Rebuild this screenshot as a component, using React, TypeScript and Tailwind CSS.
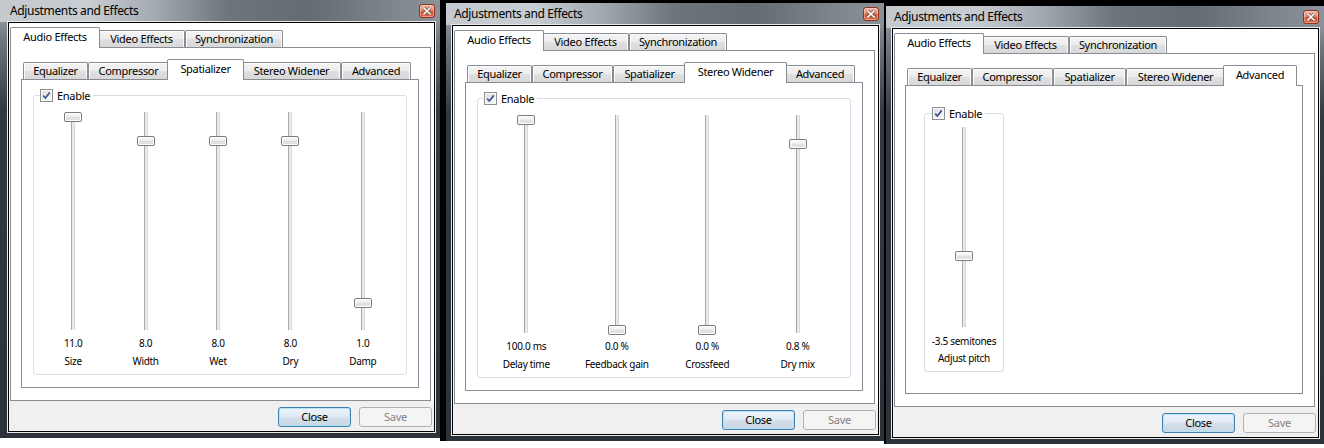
import React from "react";

type Tab = { label: string; w: number };

const OUTER: Tab[] = [
  { label: "Audio Effects", w: 86 },
  { label: "Video Effects", w: 87 },
  { label: "Synchronization", w: 98 },
];
const INNER: Tab[] = [
  { label: "Equalizer", w: 65 },
  { label: "Compressor", w: 81 },
  { label: "Spatializer", w: 73 },
  { label: "Stereo Widener", w: 99 },
  { label: "Advanced", w: 70 },
];

function Tabs({ tabs, selected }: { tabs: Tab[]; selected: number }) {
  return (
    <div className="flex items-end h-[20px] pl-[2px] shrink-0">
      {tabs.map((t, i) =>
        i === selected ? (
          <div
            key={t.label}
            style={{ width: t.w + 4 }}
            className="relative z-10 -mx-[2px] -mb-[1px] h-[21px] shrink-0 border border-b-0 border-[#898c95] rounded-t-[2px] bg-white flex items-center justify-center pb-[1px] text-[11px] tracking-[-0.3px] text-black"
          >
            {t.label}
          </div>
        ) : (
          <div
            key={t.label}
            style={{ width: t.w }}
            className="h-[17px] shrink-0 border border-b-0 border-[#898c95] rounded-t-[2px] bg-[linear-gradient(180deg,#f4f4f4_0%,#ececec_50%,#e0e0e0_51%,#d8d8d8_100%)] shadow-[inset_1px_1px_0_#fcfcfc,inset_-1px_0_0_#fcfcfc] flex items-center justify-center text-[11px] tracking-[-0.3px] text-black"
          >
            {t.label}
          </div>
        )
      )}
    </div>
  );
}

function Check() {
  return (
    <div className="w-[13px] h-[13px] shrink-0 border border-[#8e8f8f] bg-[linear-gradient(135deg,#d6d8db_0%,#eef0f2_55%,#ffffff_100%)] shadow-[inset_0_0_0_1px_#f7f7f7] flex items-center justify-center">
      <svg width="11" height="11" viewBox="0 0 11 11">
        <path d="M2.2 5.6 L4.4 8 L8.8 2.4" fill="none" stroke="#3e5590" strokeWidth="1.7" />
      </svg>
    </div>
  );
}

function Group({ narrow, children }: { narrow?: boolean; children: React.ReactNode }) {
  return (
    <div
      className={
        narrow
          ? "relative w-[80px] h-[259px] ml-[18px] mt-[27px] border border-[#d5dfe5] rounded-[3px] pt-[13px] pb-[6px]"
          : "relative h-[280px] mx-[11px] mt-[15px] border border-[#d5dfe5] rounded-[3px] pt-[16px] pb-[6px] pl-[3px] pr-[7px]"
      }
    >
      <div
        className={
          narrow
            ? "absolute -top-[7px] left-[7px] bg-white flex items-center gap-[4px] pr-[3px] h-[13px]"
            : "absolute -top-[7px] left-[6px] bg-white flex items-center gap-[4px] pr-[3px] h-[13px]"
        }
      >
        <Check />
        <span className="text-[11px] leading-[13px] tracking-[-0.3px] text-black">Enable</span>
      </div>
      {children}
    </div>
  );
}

type S = { v: string; l: string; o: number };

function Slider({ s, h, narrow }: { s: S; h: number; narrow?: boolean }) {
  return (
    <div className="flex flex-col items-center">
      <div className="relative w-[18px]" style={{ height: h }}>
        <div className="absolute left-[7px] top-0 bottom-0 w-[4px] border-l border-l-[#a9a9a9] border-r border-r-[#d9d9d9] bg-[#e8e9ea]" />
        <div
          className="absolute left-0 w-[18px] h-[10px] rounded-[2px] border border-[#7b7b7b] bg-[linear-gradient(180deg,#fbfbfb_0%,#f0f0f0_40%,#dedede_60%,#e6e6e6_100%)] shadow-[inset_0_0_0_1px_#ffffff]"
          style={{ top: s.o }}
        />
      </div>
      <div
        className={
          narrow
            ? "mt-[7px] h-[14px] leading-[14px] text-[10px] tracking-[-0.3px] whitespace-nowrap text-black"
            : "mt-[6px] h-[14px] leading-[14px] text-[10px] tracking-[-0.3px] whitespace-nowrap text-black"
        }
      >
        {s.v}
      </div>
      <div
        className={
          narrow
            ? "mt-[3px] h-[14px] leading-[14px] text-[10px] tracking-[-0.3px] whitespace-nowrap text-black"
            : "mt-[4px] h-[14px] leading-[14px] text-[10px] tracking-[-0.3px] whitespace-nowrap text-black"
        }
      >
        {s.l}
      </div>
    </div>
  );
}

function CloseX() {
  return (
    <div className="w-[16px] h-[14px] rounded-[3px] border border-[#8a3422] bg-[linear-gradient(180deg,#f2bba9_0%,#e3876b_45%,#cf5334_55%,#d96a48_100%)] shadow-[inset_0_0_0_1px_rgba(255,225,215,0.45)] flex items-center justify-center">
      <svg width="8" height="8" viewBox="0 0 8 8">
        <path d="M1 1 L7 7 M7 1 L1 7" stroke="#6a463e" strokeWidth="3" strokeLinecap="square" />
        <path d="M1 1 L7 7 M7 1 L1 7" stroke="#ffffff" strokeWidth="1.6" strokeLinecap="square" />
      </svg>
    </div>
  );
}

function Win({
  first,
  selectedInner,
  children,
}: {
  first?: boolean;
  selectedInner: number;
  children: React.ReactNode;
}) {
  return (
    <div
      className={
        first
          ? "w-[440px] h-[438px] flex flex-col shrink-0 bg-[linear-gradient(180deg,#a9afb5_0px,#6f777f_40px,#323941_110px,#2b3239_100%)]"
          : "w-[438px] h-[438px] flex flex-col shrink-0 bg-[linear-gradient(180deg,#a9afb5_0px,#6f777f_40px,#323941_110px,#2b3239_100%)]"
      }
    >
      <div
        className={
          first
            ? "h-[22px] shrink-0 flex items-center justify-between pl-[10px] pr-[5px] bg-[linear-gradient(90deg,#c4c9ce_0%,#c8cdd2_20%,#a3aab1_35%,#6c747c_52%,#636b73_70%,#7d848b_88%,#8b9299_100%)]"
            : "h-[22px] shrink-0 flex items-center justify-between pl-[8px] pr-[5px] bg-[linear-gradient(90deg,#c4c9ce_0%,#c8cdd2_20%,#a3aab1_35%,#6c747c_52%,#636b73_70%,#7d848b_88%,#8b9299_100%)]"
        }
      >
        <span className="text-[12px] tracking-[-0.35px] text-black leading-[16px]">Adjustments and Effects</span>
        <CloseX />
      </div>
      <div className={first ? "flex-1 flex pl-[8px] pr-[5px] pb-[6px]" : "flex-1 flex pl-[6px] pr-[5px] pb-[6px]"}>
        <div className="flex-1 flex flex-col border border-black shadow-[0_0_0_1px_#e8eaec] bg-[#f0f0f0]">
          <div className="pt-[4px] pl-[1px] pr-[3px] bg-white">
            <Tabs tabs={OUTER} selected={0} />
            <div className="h-[354px] border border-[#898c95] bg-white pt-[11px] pl-[10px] pr-[11px] pb-[12px] flex flex-col">
              <Tabs tabs={INNER} selected={selectedInner} />
              <div className="flex-1 border border-[#898c95] bg-white">{children}</div>
            </div>
          </div>
          <div className="flex justify-end gap-[8px] pr-[2px] mt-[6px]">
            <div className="w-[73px] h-[20px] rounded-[3px] border border-[#3c7fb1] bg-[linear-gradient(180deg,#eef4fa_0%,#e2ebf4_45%,#d2dee9_55%,#c9d7e4_100%)] shadow-[inset_0_0_0_1px_#b6e3fa] flex items-center justify-center text-[11px] tracking-[-0.3px] text-black">
              Close
            </div>
            <div className="w-[73px] h-[20px] rounded-[3px] border border-[#adb2b5] bg-[#f4f4f4] flex items-center justify-center text-[11px] tracking-[-0.3px] text-[#838383]">
              Save
            </div>
          </div>
        </div>
      </div>
    </div>
  );
}

const W1: S[] = [
  { v: "11.0", l: "Size", o: 0 },
  { v: "8.0", l: "Width", o: 24 },
  { v: "8.0", l: "Wet", o: 24 },
  { v: "8.0", l: "Dry", o: 24 },
  { v: "1.0", l: "Damp", o: 186 },
];
const W2: S[] = [
  { v: "100.0 ms", l: "Delay time", o: 0 },
  { v: "0.0 %", l: "Feedback gain", o: 210 },
  { v: "0.0 %", l: "Crossfeed", o: 210 },
  { v: "0.8 %", l: "Dry mix", o: 24 },
];
const W3: S = { v: "-3.5 semitones", l: "Adjust pitch", o: 124 };

export default function App() {
  return (
    <div className="w-[1324px] h-[448px] bg-white flex items-start overflow-hidden font-['Noto_Sans','Open_Sans',sans-serif]">
      <Win first selectedInner={2}>
        <Group>
          <div className="grid grid-cols-5">
            {W1.map((s) => (
              <Slider key={s.l} s={s} h={218} />
            ))}
          </div>
        </Group>
      </Win>
      <div className="w-[6px] h-[441px] bg-black shrink-0" />
      <div className="pt-[3px] bg-black shrink-0">
        <Win selectedInner={3}>
          <Group>
            <div className="grid grid-cols-4">
              {W2.map((s) => (
                <Slider key={s.l} s={s} h={218} />
              ))}
            </div>
          </Group>
        </Win>
      </div>
      <div className="w-[2px] h-[444px] bg-black shrink-0" />
      <div className="pt-[6px] bg-black shrink-0">
        <Win selectedInner={4}>
          <Group narrow>
            <Slider s={W3} h={200} narrow />
          </Group>
        </Win>
      </div>
    </div>
  );
}
